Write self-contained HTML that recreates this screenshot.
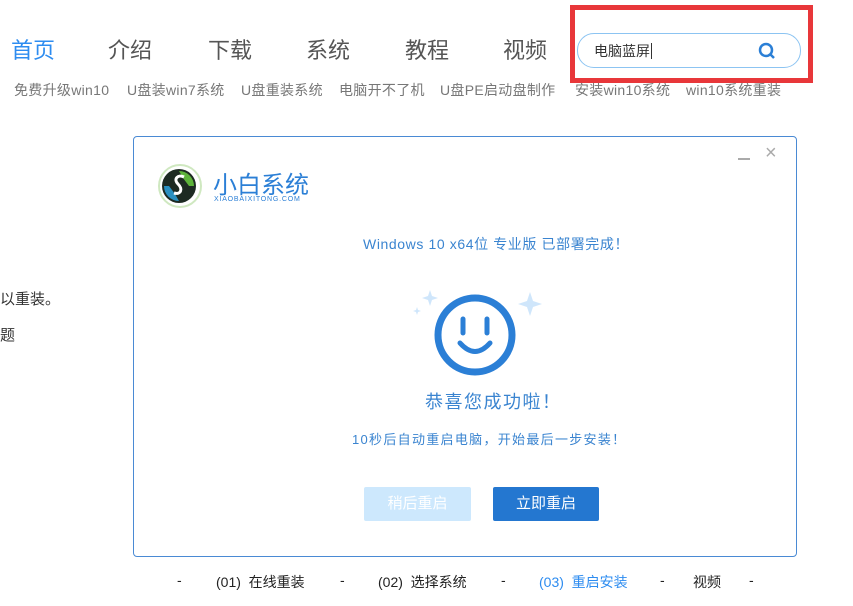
<!DOCTYPE html>
<html><head><meta charset="utf-8"><style>
body{margin:0;width:853px;height:606px;background:#fff;position:relative;overflow:hidden;font-family:"Liberation Sans","Noto Sans CJK SC",sans-serif}
.a{position:absolute;white-space:nowrap}
.nav{top:33px;font-size:22px;color:#555}
.sub{top:80px;font-size:14px;color:#777;letter-spacing:0.3px}
.st{top:572px;font-size:14px;color:#222}
</style></head><body>
<div class="a nav" style="left:11px;color:#2d8cf0">首页</div>
<div class="a nav" style="left:108px">介绍</div>
<div class="a nav" style="left:208px">下载</div>
<div class="a nav" style="left:306px">系统</div>
<div class="a nav" style="left:405px">教程</div>
<div class="a nav" style="left:503px">视频</div>
<div class="a" style="left:577px;top:33px;width:222px;height:33px;border:1px solid #8cc4f2;border-radius:17px"></div>
<div class="a" style="left:594px;top:41px;font-size:14px;color:#333">电脑蓝屏<span style="border-left:1px solid #333;margin-left:1px"></span></div>
<svg class="a" style="left:757px;top:41px" width="20" height="20"><circle cx="9" cy="9" r="6" fill="none" stroke="#2b7fd6" stroke-width="2.5"/><line x1="13" y1="13" x2="17" y2="17" stroke="#2b7fd6" stroke-width="2.5"/></svg>
<div class="a" style="left:570px;top:5px;width:233px;height:68px;border:5px solid #e8373a"></div>
<div class="a sub" style="left:14px">免费升级win10</div>
<div class="a sub" style="left:127px">U盘装win7系统</div>
<div class="a sub" style="left:241px">U盘重装系统</div>
<div class="a sub" style="left:339px">电脑开不了机</div>
<div class="a sub" style="left:440px">U盘PE启动盘制作</div>
<div class="a sub" style="left:575px">安装win10系统</div>
<div class="a sub" style="left:686px">win10系统重装</div>
<div class="a" style="left:0;top:288px;font-size:15px;color:#333">以重装。</div>
<div class="a" style="left:0;top:324px;font-size:15px;color:#333">题</div>
<div class="a" style="left:133px;top:136px;width:662px;height:419px;border:1px solid #4a8ad4;border-radius:4px"></div>
<div class="a" style="left:738px;top:158px;width:12px;height:2px;background:#aaa"></div>
<div class="a" style="left:765px;top:142px;font-size:20px;color:#aaa">×</div>
<svg class="a" style="left:157px;top:163px" width="46" height="46"><circle cx="23" cy="23" r="21" fill="none" stroke="#cfe8c0" stroke-width="2"/><circle cx="22" cy="23" r="17" fill="#1d2a22"/><path d="M22 8a15 15 0 0 1 15 15h-5l-6-8z" fill="#5db33a"/><path d="M22 38a15 15 0 0 1-15-15h5l6 8z" fill="#2a8fc0"/><path d="M27 14c-6-3-11 2-6 7s3 11-4 9" fill="none" stroke="#fff" stroke-width="3"/></svg>
<div class="a" style="left:213px;top:165px;font-size:24px;color:#2b7fd6">小白系统</div>
<div class="a" style="left:214px;top:196px;font-size:7px;color:#2b7fd6;letter-spacing:0.8px">XIAOBAIXITONG.COM</div>
<div class="a" style="left:363px;top:234px;font-size:14px;color:#3a84d0;letter-spacing:0.6px">Windows 10 x64位 专业版 已部署完成！</div>
<svg class="a" style="left:405px;top:285px" width="145" height="95"><path d="M25 5l2 6 6 2-6 2-2 6-2-6-6-2 6-2z" fill="#cfe6fb"/><path d="M12 22l1 3 3 1-3 1-1 3-1-3-3-1 3-1z" fill="#cfe6fb"/><path d="M125 7l3 9 9 3-9 3-3 9-3-9-9-3 9-3z" fill="#cfe6fb"/><circle cx="70" cy="50" r="37" fill="none" stroke="#2b7fd6" stroke-width="7"/><line x1="58" y1="34" x2="58" y2="48" stroke="#2b7fd6" stroke-width="5" stroke-linecap="round"/><line x1="82" y1="34" x2="82" y2="48" stroke="#2b7fd6" stroke-width="5" stroke-linecap="round"/><path d="M55 58q15 17 30 0" fill="none" stroke="#2b7fd6" stroke-width="5" stroke-linecap="round"/></svg>
<div class="a" style="left:425px;top:388px;font-size:18px;color:#3a84d0;letter-spacing:1.5px">恭喜您成功啦！</div>
<div class="a" style="left:352px;top:429px;font-size:13px;color:#3a84d0;letter-spacing:1.3px">10秒后自动重启电脑，开始最后一步安装！</div>
<div class="a" style="left:364px;top:487px;width:107px;height:34px;background:#cde8fd;border-radius:2px;color:#fff;font-size:15px;text-align:center;line-height:34px">稍后重启</div>
<div class="a" style="left:493px;top:487px;width:106px;height:34px;background:#2477d0;border-radius:2px;color:#fff;font-size:15px;text-align:center;line-height:34px">立即重启</div>
<div class="a st" style="left:177px">-</div>
<div class="a st" style="left:216px">(01)&nbsp; 在线重装</div>
<div class="a st" style="left:340px">-</div>
<div class="a st" style="left:378px">(02)&nbsp; 选择系统</div>
<div class="a st" style="left:501px">-</div>
<div class="a st" style="left:539px;color:#2d8cf0">(03)&nbsp; 重启安装</div>
<div class="a st" style="left:660px">-</div>
<div class="a st" style="left:693px">视频</div>
<div class="a st" style="left:749px">-</div>
</body></html>
